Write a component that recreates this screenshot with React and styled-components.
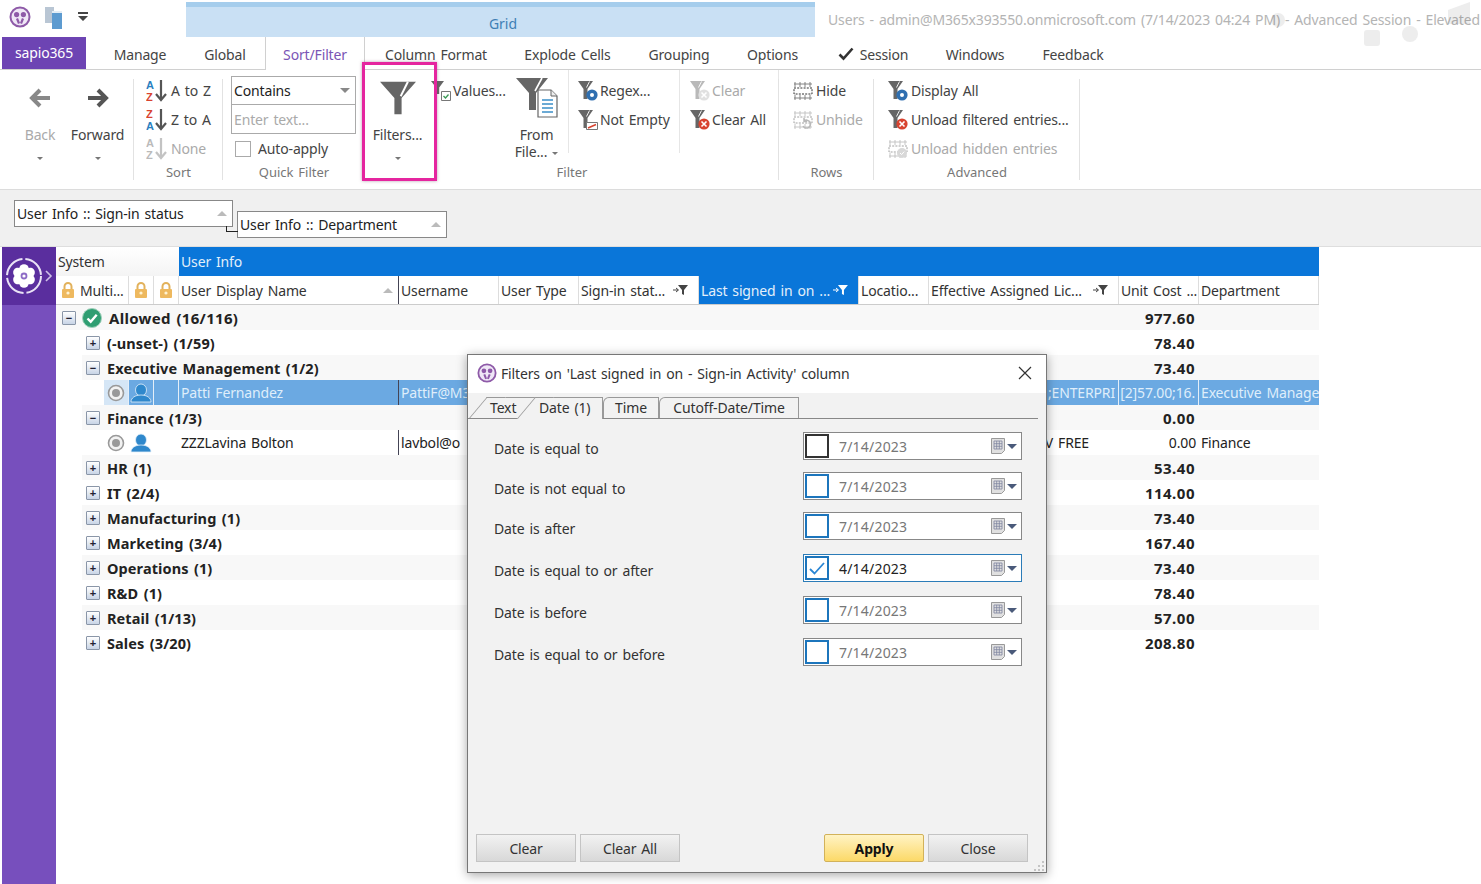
import React from 'react';
import styled, { createGlobalStyle } from 'styled-components';

const Global = createGlobalStyle`
  html, body { margin: 0; padding: 0; background: #fff; }
  body { font-family: "Noto Sans", "Open Sans", "Liberation Sans", sans-serif; font-size: 14px; color: #333; }
`;

const Page = styled.div`
  position: relative; width: 1481px; height: 884px; overflow: hidden; background: #fff;
  letter-spacing: -0.15px; word-spacing: 1.5px;
`;

/* ---------- title ---------- */
const TitleBar = styled.div`display: flex; height: 37px; align-items: stretch;`;
const Qat = styled.div`width: 186px; display: flex; align-items: center; padding: 0 0 4px 9px; box-sizing: border-box; gap: 13px;`;
const ContextTab = styled.div`
  width: 629px; margin-top: 2px; background: #c9e0f4; border-top: 5px solid #a5cdec; box-sizing: border-box;
  color: #3f7fb5; text-align: center; padding: 7px 0 0 5px; line-height: 20px; letter-spacing: 0;
`;
const WindowTitle = styled.div`margin-left: 13px; padding-top: 10px; line-height: 20px; color: #b4b4b4; white-space: nowrap;`;
const Ghost = styled.svg`position: absolute; left: 1270px; top: 0; opacity: .1;`;

/* ---------- tabs ---------- */
const TabRow = styled.div`display: flex; height: 33px; border-bottom: 1px solid #d0d0d0; box-sizing: border-box; padding-left: 2px;`;
const AppTab = styled.div`
  width: 84px; height: 32px; background: #6d44b3; color: #fff; text-align: center; line-height: 31px; margin-right: 9px;
`;
const Tab = styled.div`
  flex: 0 0 ${p => p.$w}px; box-sizing: border-box; height: ${p => p.$active ? 33 : 32}px; padding-top: 2px; white-space: nowrap;
  color: ${p => p.$active ? '#7a55b5' : '#444'};
  background: #fff;
  ${p => p.$active && 'border-left: 1px solid #d0d0d0; border-right: 1px solid #d0d0d0;'}
  display: flex; justify-content: center; gap: 6px; align-items: center;
`;

/* ---------- ribbon ---------- */
const Ribbon = styled.div`display: flex; height: 120px; padding-left: 2px; box-sizing: border-box; border-bottom: 1px solid #dcdcdc;`;
const Group = styled.div`
  flex: 0 0 ${p => p.$w}px; box-sizing: border-box; display: flex; flex-direction: column; position: relative;
  &::after { content: ''; position: absolute; right: 0; top: 9px; bottom: 9px; width: 1px; background: #e2e2e2; }
`;
const GroupBody = styled.div`flex: 1; display: flex; min-height: 0;`;
const GroupLabel = styled.div`height: 28px; line-height: 22px; text-align: center; color: #777; font-size: 13px; letter-spacing: 0;`;
const Big = styled.div`
  flex: 0 0 ${p => p.$w}px; min-width: 0; display: flex; flex-direction: column; align-items: center; color: ${p => p.$off ? '#aaa' : '#444'};
  line-height: 17px; padding-left: ${p => p.$pad || 0}px; box-sizing: border-box; white-space: nowrap;
  ${p => p.$sep && 'border-right: 1px solid #e6e6e6; margin-bottom: 8px;'}
`;
const BigIcon = styled.div`height: 46px; flex: none; display: flex; align-items: center; justify-content: center; margin: 5px 0;`;
const Dot = styled.div`width: 0; height: 0; border: 3px solid transparent; border-top: 3px solid #777; margin-top: 14px; border-bottom: 0;`;
const Stack = styled.div`
  flex: 0 0 ${p => p.$w}px; min-width: 0; box-sizing: border-box; padding: 6px 0 0 ${p => p.$pad || 0}px; display: flex; flex-direction: column;
  ${p => p.$sep && `border-right: 1px solid #e6e6e6; margin-bottom: 8px;`}
`;
const Item = styled.div`
  height: 29px; flex: none; display: flex; align-items: center; gap: ${p => p.$gap ?? 2}px; padding-left: ${p => p.$in || 0}px; white-space: nowrap; color: ${p => p.$off ? '#aaa' : '#444'};
`;
const IconBox = styled.span`flex: 0 0 ${p => p.$w || 21}px; display: flex; justify-content: center;`;
const Combo = styled.div`
  width: 125px; height: 29px; flex: none; border: 1px solid #aaa; box-sizing: border-box; display: flex; align-items: center; padding: 0 2px; color: ${p => p.$hint ? '#aaa' : '#222'};
  justify-content: space-between; background: #fff; & + & { border-top: 0; }
`;
const Tri = styled.span`
  width: 0; height: 0; border-left: 5px solid transparent; border-right: 5px solid transparent;
  ${p => p.$up ? `border-bottom: 5px solid ${p.$c || '#bbb'};` : `border-top: 5px solid ${p.$c || '#888'};`}
  margin-right: ${p => p.$mr ?? 3}px;
`;
const MiniTri = styled.span`
  display: inline-block; width: 0; height: 0; border-left: 3px solid transparent; border-right: 3px solid transparent; border-top: 3px solid #777; vertical-align: 2px;
`;
const Check = styled.span`width: 14px; height: 14px; border: 1px solid #aaa; background: #fff; display: inline-block;`;
const Highlight = styled.div`
  position: absolute; left: 362px; top: 62px; width: 75px; height: 119px; box-sizing: border-box;
  border: 3px solid #e5259f; box-shadow: 0 0 3px rgba(120,60,100,.5);
`;

/* ---------- group-by ---------- */
const GroupBy = styled.div`height: 57px; background: #f0f0f0; padding-left: 14px; display: flex; gap: 4px; box-sizing: border-box; border-bottom: 1px solid #dedede;`;
const GroupChip = styled.div`
  width: ${p => p.$w}px; height: 27px; margin-top: ${p => p.$top}px; box-sizing: border-box; background: #fff; border: 1px solid #888;
  display: flex; align-items: center; justify-content: space-between; padding: 0 5px 0 2px; color: #222; position: relative; white-space: nowrap;
  ${p => p.$link && `&::before { content: ''; position: absolute; left: -12px; top: 14px; width: 11px; height: 5px; border-left: 1px solid #222; border-bottom: 1px solid #222; }`}
`;

/* ---------- grid ---------- */
const Main = styled.div`display: flex; padding-left: 2px; height: 637px;`;
const Side = styled.div`width: 54px; background: #774fbd; flex: none;`;
const SideTop = styled.div`height: 58px; background: #5a2e9e; display: flex; align-items: center; padding: 0 0 0 1px; box-sizing: border-box;`;
const Sheet = styled.div`width: 1263px; flex: none;`;
const Bands = styled.div`display: flex; height: 29px;`;
const Band = styled.div`
  width: ${p => p.$w}px; line-height: 29px; padding-left: 2px; box-sizing: border-box; flex: ${p => p.$fill ? 1 : 'none'};
  background: ${p => p.$blue ? '#0a76d9' : 'linear-gradient(#fff,#f4f4f4)'}; color: ${p => p.$blue ? '#e3effa' : '#333'};
`;
const cols = '73px 25px 25px 220px 100px 80px 120px 160px 70px 190px 80px 120px';
const HeadRow = styled.div`display: grid; grid-template-columns: ${cols}; height: 29px; border-bottom: 1px solid #ccc; box-sizing: border-box;`;
const Head = styled.div`
  display: flex; align-items: center; justify-content: ${p => p.$only ? 'center' : p.$lock ? 'flex-start' : 'space-between'};
  padding: 0 ${p => p.$pr ?? 4}px 0 ${p => p.$only ? 0 : p.$lock ? 5 : 2}px; overflow: hidden; white-space: nowrap; box-sizing: border-box;
  border-right: 1px solid ${p => p.$dark ? '#445' : '#ddd'}; gap: ${p => p.$lock ? 5 : 3}px;
  background: ${p => p.$blue ? '#0a76d9' : '#fff'}; color: ${p => p.$blue ? '#e3effa' : '#333'};
`;
const Row = styled.div`
  height: 25px; margin-left: ${p => p.$in}px; display: flex; align-items: center; background: ${p => p.$shade ? '#f8f8f8' : '#fff'};
  font-weight: 700; font-size: ${p => p.$top ? 15 : 14.5}px; letter-spacing: ${p => p.$top ? .3 : .1}px; color: #222; padding-left: ${p => p.$pad}px; white-space: nowrap; box-sizing: border-box;
`;
const Expander = styled.span`
  width: 12px; height: 12px; border: 1px solid #8a96a8; border-radius: 1px; background: linear-gradient(#fff, #c8d4e6); color: #223; flex: none; margin-right: ${p => p.$mr}px;
  display: flex; align-items: center; justify-content: center; font: 700 11px/12px "Liberation Sans", sans-serif;
`;
const StatusIcon = styled.span`display: flex; margin-right: 7px; flex: none;`;
const Amount = styled.span`margin: 0 124px 0 auto; flex: none; font-size: 15px; letter-spacing: .5px;`;
const DataRow = styled.div`
  margin-left: 48px; height: 25px; display: grid; grid-template-columns: 25px 25px 25px 220px 100px 80px 120px 160px 70px 190px 80px 120px;
  background: ${p => p.$sel ? '#6ba9e2' : '#fff'}; color: ${p => p.$sel ? '#dfeefb' : '#222'};
`;
const Cell = styled.div`
  overflow: hidden; white-space: nowrap; padding: 0 ${p => p.$right ?? 0}px 0 ${p => p.$left ?? 2}px; box-sizing: border-box; 
  ${p => p.$line && `border-right: 1px solid ${p.$line};`}
  ${p => p.$focus && 'background: #d5e6f6;'}
  display: flex; align-items: center; ${p => p.$right !== undefined && 'justify-content: flex-end;'}
`;

/* ---------- dialog ---------- */
const Dialog = styled.div`
  position: absolute; left: 467px; top: 354px; width: 580px; height: 519px; box-sizing: border-box; background: #f2f2f2; border: 1px solid #777;
  box-shadow: 0 2px 10px rgba(0,0,0,.35); display: flex; flex-direction: column;
`;
const DlgTitle = styled.div`
  height: 38px; background: #fff; display: flex; align-items: center; padding: 0 14px 2px 9px; box-sizing: border-box; gap: 4px; color: #333; white-space: nowrap; flex: none;
`;
const CloseX = styled.svg`margin-left: auto;`;
const DlgTabs = styled.div`
  display: flex; height: 26px; margin-right: 8px; padding-left: 19px; box-sizing: border-box; border-bottom: 1px solid #888; flex: none; align-items: flex-end;
`;
const DlgTab = styled.div`
  position: relative; width: ${p => p.$w}px; flex: none; box-sizing: border-box; padding-left: ${p => p.$pad ?? 0}px; text-align: ${p => p.$pad !== undefined ? 'left' : 'center'}; line-height: 20px; color: #333; white-space: nowrap;
  border-top: 1px solid #999; 
  ${p => p.$edge && 'border-right: 1px solid #999;'}
  ${p => p.$round && 'border-top-left-radius: 6px; border-left: 1px solid #999;'}
  background: #f2f2f2; z-index: ${p => p.$active ? 2 : 1};
  margin-bottom: ${p => p.$active ? -1 : 0}px; height: ${p => p.$active ? 22 : 21}px;
  ${p => p.$slant && `&::before {
    content: ''; position: absolute; left: -9px; bottom: 0; top: -1px; width: 18px; background: inherit; border-left: 1px solid #999; border-top: 1px solid #999;
    transform: skewX(-40deg); z-index: -1;
  }`}
`;
const DlgBody = styled.div`flex: 1; padding: 13px 24px 0 26px; display: flex; flex-direction: column;`;
const DateRow = styled.div`display: flex; align-items: center; justify-content: space-between; height: 28px; margin-top: ${p => p.$gap}px; color: #333;`;
const DateLabel = styled.span`padding-top: 5px;`;
const Picker = styled.div`
  width: 219px; height: 28px; box-sizing: border-box; background: #fff; border: 1px solid ${p => p.$on ? '#2b7cb8' : '#888'}; letter-spacing: .2px;
  display: flex; align-items: center; padding: 0 4px 0 1px; color: ${p => p.$on ? '#222' : '#777'};
`;
const Box = styled.span`
  width: 24px; height: 24px; box-sizing: border-box; border: 2px solid ${p => p.$dark ? '#333' : '#1c75bc'}; background: #fff; margin-right: 10px; display: flex; align-items: center; justify-content: center; flex: none;
`;
const PickerIcons = styled.span`margin-left: auto; display: flex; align-items: center; gap: 2px;`;
const Footer = styled.div`margin-top: auto; padding: 0 18px 10px 8px; display: flex; gap: 4px; flex: none; position: relative;`;
const Btn = styled.div`
  width: 100px; height: 28px; box-sizing: border-box; text-align: center; line-height: 27px; color: #333; border: 1px solid #c4c4c4;
  background: ${p => p.$main ? 'linear-gradient(#fff3c4,#fcd968)' : 'linear-gradient(#f2f2f2,#d8d8d8)'};
  ${p => p.$main && 'border-color: #d2b25a; font-weight: 700; color: #111; border-radius: 2px; margin-left: auto;'}
`;
const Grip = styled.svg`position: absolute; right: 1px; bottom: 1px;`;
const FlipSvg = styled.svg`${p => p.$flip && 'transform: scaleX(-1);'}`;

/* ---------- icons ---------- */
const Logo = ({ s = 22 }) => (
  <svg width={s} height={s} viewBox="0 0 22 22">
    <circle cx="11" cy="11" r="9.5" fill="#efe7f6" stroke="#8e5aa8" strokeWidth="2" />
    <circle cx="7.6" cy="8.6" r="2.6" fill="#8e5aa8" /><circle cx="14.4" cy="8.6" r="2.6" fill="#8e5aa8" />
    <path d="M8 12.5l2 5M14 12.5l-2 5" stroke="#8e5aa8" strokeWidth="2.2" />
  </svg>
);
const Pages = () => (
  <svg width="20" height="24" viewBox="0 0 20 24">
    <path d="M1 2h9v16H1z" fill="#b9c6d4" /><path d="M8 6h10v18H8z" fill="#5d9bd0" /><path d="M8 6h10v2H8z" fill="#e3edf5" />
  </svg>
);
const QatCaret = () => (
  <svg width="12" height="12" viewBox="0 0 12 12"><path d="M1 1h10v2H1zM1 5h10L6 10z" fill="#444" /></svg>
);
const Arrow = ({ left, c }) => (
  <FlipSvg $flip={left} width="22" height="22" viewBox="0 0 22 22">
    <path d="M1 11h17M11 3l8 8-8 8" fill="none" stroke={c} strokeWidth="4" />
  </FlipSvg>
);
const Sort = ({ a, b, ca, cb, arrow = '#555', off }) => (
  <svg width="22" height="24" viewBox="0 0 22 24" opacity={off ? .5 : 1}>
    <text x="0" y="10" fontSize="11" fontWeight="700" fontFamily="Liberation Sans" fill={ca}>{a}</text>
    <text x="0" y="22" fontSize="11" fontWeight="700" fontFamily="Liberation Sans" fill={cb}>{b}</text>
    <path d="M15 1v19M10 15l5 6 5-6" fill="none" stroke={arrow} strokeWidth="2.2" />
  </svg>
);
const BigFunnel = () => (
  <svg width="36" height="36" viewBox="0 0 20 20">
    <path d="M0 1h20L12 10v9H8v-9z" fill="#666" /><path d="M15.5 1l-4 8" stroke="#fff" strokeWidth="1.1" />
  </svg>
);
const Funnel = ({ c = '#666', badge, off }) => (
  <svg width="20" height="20" viewBox="0 0 20 20" opacity={off ? .45 : 1}>
    <path d="M0 0h15L9.5 8v10h-4V8z" fill={c} />
    <path d="M11.5 .5l-3 6" stroke="#fff" strokeWidth=".9" />
    {badge === 'blue' && <g><circle cx="14" cy="14" r="5.6" fill="#2f6fb0" /><circle cx="14" cy="14" r="2" fill="#fff" /></g>}
    {badge === 'red' && <g><circle cx="14" cy="14" r="5.6" fill="#d8432f" /><path d="M11.5 11.5l5 5M16.5 11.5l-5 5" stroke="#fff" strokeWidth="1.6" /></g>}
    {badge === 'gray' && <g><circle cx="14" cy="14" r="5.6" fill="#bbb" /><path d="M11.5 11.5l5 5M16.5 11.5l-5 5" stroke="#fff" strokeWidth="1.6" /></g>}
    {badge === 'empty' && <g><path d="M8.5 12.5h11v7h-11z" fill="#fff" stroke="#777" /><path d="M10 18l8-3.5" stroke="#d8432f" strokeWidth="1.6" /></g>}
  </svg>
);
const ValuesIcon = () => (
  <svg width="20" height="20" viewBox="0 0 20 20">
    <path d="M0 0h13L8.2 6.5V13H5V6.5z" fill="#666" />
    <path d="M10.5 10.5h9v9h-9z" fill="#fff" stroke="#777" /><path d="M12.5 15l2 2 3-3.5" fill="none" stroke="#3a9a55" strokeWidth="1.3" />
  </svg>
);
const BigFile = () => (
  <svg width="42" height="44" viewBox="0 0 42 44">
    <path d="M0 2h32L20 17v17h-7V17z" fill="#666" />
    <path d="M26 2l-7 13" stroke="#fff" strokeWidth="1.6" />
    <path d="M22 14h13l6 6v21H22z" fill="#fff" stroke="#666" strokeWidth="1.2" />
    <path d="M35 14v6h6" fill="#eee" stroke="#666" />
    <path d="M26 24h11M26 28h11M26 32h11M26 36h11" stroke="#3b8fc7" strokeWidth="1.3" />
  </svg>
);
const RowsIcon = ({ off, mark }) => (
  <svg width="20" height="20" viewBox="0 0 20 20" opacity={off ? .45 : 1}>
    <path d="M2 1v5M7 1v5M12 1v5M17 1v5M2 14v5M7 14v5M12 14v5M17 14v5M1 3h18M1 17h18" stroke="#777" strokeWidth=".9" />
    <path d="M1 7h18v6H1z" fill="#fff" stroke="#333" strokeDasharray="2 1.2" />
    {mark === 'undo' && <path d="M10 16a4 4 0 1 0 1-5M11 8v3.4h3" fill="none" stroke="#666" strokeWidth="1.5" />}
    {mark === 'gear' && <g><circle cx="14" cy="14" r="5" fill="#aaa" /><path d="M12 14l1.6 1.6 2.6-3" stroke="#fff" fill="none" /></g>}
  </svg>
);
const TinyFilter = ({ c = '#444' }) => (
  <svg width="15" height="12" viewBox="0 0 15 12"><path d="M5 1h10l-4 5v5l-2-1V6z" fill={c} /><path d="M0 6h5M3 4l2.5 2L3 8" stroke={c} fill="none" /></svg>
);
const Lock = () => (
  <svg width="14" height="17" viewBox="0 0 14 17">
    <path d="M3.5 7V4.5a3.5 3.5 0 0 1 7 0V7" fill="none" stroke="#e2b25c" strokeWidth="2" />
    <rect x="1" y="7" width="12" height="9" rx="1" fill="#eeb95f" /><circle cx="7" cy="11" r="1.6" fill="#fff3d2" />
  </svg>
);
const SideGear = () => (
  <svg width="50" height="44" viewBox="0 0 50 44">
    <circle cx="21" cy="22" r="17" fill="none" stroke="#e9e2f5" strokeWidth="2" strokeDasharray="24 3" />
    {[0, 60, 120, 180, 240, 300].map(a => <circle key={a} cx="21" cy="15" r="4.8" fill="#fff" transform={`rotate(${a} 21 22)`} />)}
    <circle cx="21" cy="22" r="3.4" fill="#8e6cc6" /><circle cx="21" cy="22" r="1.6" fill="#fff" />
    <path d="M43 17l5 5-5 5" fill="none" stroke="#cdbfe6" strokeWidth="1.6" />
  </svg>
);
const Ok = () => (
  <svg width="20" height="20" viewBox="0 0 20 20">
    <circle cx="10" cy="10" r="9.5" fill="#2f9e72" stroke="#9fd0ba" /><path d="M5.5 10.5l3.2 3.2 6-7" fill="none" stroke="#fff" strokeWidth="2.4" />
  </svg>
);
const Radio = () => (
  <svg width="18" height="18" viewBox="0 0 18 18"><circle cx="9" cy="9" r="7.5" fill="#f2f2f2" stroke="#999" strokeWidth="1.6" /><circle cx="9" cy="9" r="4" fill="#999" /></svg>
);
const Person = () => (
  <svg width="22" height="20" viewBox="0 0 22 20">
    <ellipse cx="11" cy="7" rx="5.5" ry="6" fill="#2f88cc" stroke="#e3f0fa" strokeWidth=".8" />
    <path d="M1 19c0-4 4-7 10-7s10 3 10 7z" fill="#2f88cc" stroke="#e3f0fa" strokeWidth=".8" />
  </svg>
);
const Calendar = () => (
  <svg width="14" height="16" viewBox="0 0 14 16">
    <path d="M.5.5h13v12l-3 3h-10z" fill="#e0e0e0" stroke="#999" />
    <path d="M3 3h8v8H3zM5.7 3v8M8.3 3v8M3 5.7h8M3 8.3h8" fill="none" stroke="#7d84a0" strokeWidth=".8" />
  </svg>
);

/* ---------- data ---------- */
const heads = [
  { t: 'Multi...', lock: true }, { lock: true, only: true }, { lock: true, only: true },
  { t: 'User Display Name', up: true, dark: true }, { t: 'Username' }, { t: 'User Type' },
  { t: 'Sign-in stat...', f: '#444' }, { t: 'Last signed in on ...', f: '#fff', blue: true }, { t: 'Locatio...' },
  { t: 'Effective Assigned Lic...', f: '#444' }, { t: 'Unit Cost ...' }, { t: 'Department' },
];
const rows = [
  { k: 'g', t: 'Allowed (16/116)', a: '977.60', top: true, shade: true },
  { k: 'g', t: '(-unset-) (1/59)', a: '78.40' },
  { k: 'g', t: 'Executive Management (1/2)', a: '73.40', open: true, shade: true },
  { k: 'd', sel: true, name: 'Patti Fernandez', user: 'PattiF@M365x', lic: ';ENTERPRI', licPad: 3, cost: '[2]57.00;16.', dept: 'Executive Management' },
  { k: 'g', t: 'Finance (1/3)', a: '0.00', open: true, shade: true },
  { k: 'd', name: 'ZZZLavina Bolton', user: 'lavbol@o', lic: 'V FREE', licPad: 30, cost: '0.00', dept: 'Finance' },
  { k: 'g', t: 'HR (1)', a: '53.40', shade: true },
  { k: 'g', t: 'IT (2/4)', a: '114.00' },
  { k: 'g', t: 'Manufacturing (1)', a: '73.40', shade: true },
  { k: 'g', t: 'Marketing (3/4)', a: '167.40' },
  { k: 'g', t: 'Operations (1)', a: '73.40', shade: true },
  { k: 'g', t: 'R&D (1)', a: '78.40' },
  { k: 'g', t: 'Retail (1/13)', a: '57.00', shade: true },
  { k: 'g', t: 'Sales (3/20)', a: '208.80' },
];
const dates = [
  { l: 'Date is equal to', d: '7/14/2023', gap: 0, dark: true },
  { l: 'Date is not equal to', d: '7/14/2023', gap: 12 },
  { l: 'Date is after', d: '7/14/2023', gap: 12 },
  { l: 'Date is equal to or after', d: '4/14/2023', gap: 14, on: true },
  { l: 'Date is before', d: '7/14/2023', gap: 14 },
  { l: 'Date is equal to or before', d: '7/14/2023', gap: 14 },
];
const tabs = [
  { t: 'Manage', w: 90 }, { t: 'Global', w: 80 }, { t: 'Sort/Filter', w: 100, active: true }, { t: 'Column Format', w: 142 },
  { t: 'Explode Cells', w: 121 }, { t: 'Grouping', w: 102 }, { t: 'Options', w: 85 }, { t: 'Session', w: 116, check: true },
  { t: 'Windows', w: 88 }, { t: 'Feedback', w: 108 },
];
const sel = '#e4eef8';

export default function App() {
  return (
    <Page>
      <Global />
      <TitleBar>
        <Qat><Logo /><Pages /><QatCaret /></Qat>
        <ContextTab>Grid</ContextTab>
        <WindowTitle>Users - admin@M365x393550.onmicrosoft.com (7/14/2023 04:24 PM) - Advanced Session - Elevated</WindowTitle>
      </TitleBar>
      <Ghost width="200" height="50" viewBox="0 0 200 50">
        <circle cx="8" cy="20" r="7" fill="#555" /><rect x="94" y="30" width="16" height="16" rx="3" fill="#555" /><circle cx="140" cy="34" r="8" fill="#555" /><path d="M178 10l22-8v22h-22z" fill="#555" />
      </Ghost>
      <TabRow>
        <AppTab>sapio365</AppTab>
        {tabs.map(x => (
          <Tab key={x.t} $w={x.w} $active={x.active}>
            {x.check && <svg width="16" height="14" viewBox="0 0 16 14"><path d="M1.5 7.5l4 4 9-10" fill="none" stroke="#333" strokeWidth="2.6" /></svg>}
            {x.t}
          </Tab>
        ))}
      </TabRow>
      <Ribbon>
        <Group $w={132}>
          <GroupBody>
            <Big $w={69} $pad={7} $off><BigIcon><Arrow left c="#888" /></BigIcon>Back<Dot /></Big>
            <Big $w={53}><BigIcon><Arrow c="#555" /></BigIcon>Forward<Dot /></Big>
          </GroupBody>
        </Group>
        <Group $w={89}>
          <GroupBody>
            <Stack $w={89} $pad={12}>
              <Item $gap={3}><Sort a="A" b="Z" ca="#2a7fc0" cb="#d8432f" />A to Z</Item>
              <Item $gap={3}><Sort a="Z" b="A" ca="#d8432f" cb="#2a7fc0" />Z to A</Item>
              <Item $gap={3} $off><Sort off a="A" b="Z" ca="#777" cb="#777" arrow="#888" />None</Item>
            </Stack>
          </GroupBody>
          <GroupLabel>Sort</GroupLabel>
        </Group>
        <Group $w={142}>
          <GroupBody>
            <Stack $w={142} $pad={8}>
              <Combo>Contains<Tri /></Combo>
              <Combo $hint>Enter text...</Combo>
              <Item $gap={7} $in={4}><Check />Auto-apply</Item>
            </Stack>
          </GroupBody>
          <GroupLabel>Quick Filter</GroupLabel>
        </Group>
        <Group $w={414}>
          <GroupBody>
            <Big $w={65}><BigIcon><BigFunnel /></BigIcon>Filters...<Dot /></Big>
            <Stack $w={75}>
              <Item><IconBox><ValuesIcon /></IconBox>Values...</Item>
            </Stack>
            <Big $w={64} $sep>
              <BigIcon><BigFile /></BigIcon>From<span>File... <MiniTri /></span>
            </Big>
            <Stack $w={111} $pad={8} $sep>
              <Item><IconBox><Funnel badge="blue" /></IconBox>Regex...</Item>
              <Item><IconBox><Funnel badge="empty" /></IconBox>Not Empty</Item>
            </Stack>
            <Stack $w={99} $pad={9} $sep>
              <Item $off><IconBox><Funnel badge="gray" off /></IconBox>Clear</Item>
              <Item><IconBox><Funnel badge="red" /></IconBox>Clear All</Item>
            </Stack>
          </GroupBody>
          <GroupLabel>Filter</GroupLabel>
        </Group>
        <Group $w={95}>
          <GroupBody>
            <Stack $w={95} $pad={13}>
              <Item><IconBox $w={22}><RowsIcon /></IconBox>Hide</Item>
              <Item $off><IconBox $w={22}><RowsIcon off mark="undo" /></IconBox>Unhide</Item>
            </Stack>
          </GroupBody>
          <GroupLabel>Rows</GroupLabel>
        </Group>
        <Group $w={206}>
          <GroupBody>
            <Stack $w={206} $pad={13}>
              <Item><IconBox $w={22}><Funnel badge="blue" /></IconBox>Display All</Item>
              <Item><IconBox $w={22}><Funnel badge="red" /></IconBox>Unload filtered entries...</Item>
              <Item $off><IconBox $w={22}><RowsIcon off mark="gear" /></IconBox>Unload hidden entries</Item>
            </Stack>
          </GroupBody>
          <GroupLabel>Advanced</GroupLabel>
        </Group>
      </Ribbon>
      <Highlight />
      <GroupBy>
        <GroupChip $w={219} $top={10}>User Info :: Sign-in status<Tri $up $mr={0} /></GroupChip>
        <GroupChip $w={210} $top={21} $link>User Info :: Department<Tri $up $mr={0} /></GroupChip>
      </GroupBy>
      <Main>
        <Side><SideTop><SideGear /></SideTop></Side>
        <Sheet>
          <Bands>
            <Band $w={123}>System</Band>
            <Band $blue $fill>User Info</Band>
          </Bands>
          <HeadRow>
            {heads.map((h, i) => (
              <Head key={i} $blue={h.blue} $dark={h.dark} $lock={h.lock} $only={h.only} $pr={h.f ? 10 : 1}>
                {h.lock && <Lock />}
                {h.t && <span>{h.t}</span>}
                {h.up && <Tri $up $mr={4} />}
                {h.f && <TinyFilter c={h.f} />}
              </Head>
            ))}
          </HeadRow>
          {rows.map((r, i) => r.k === 'g' ? (
            <Row key={i} $in={r.top ? 0 : 26} $pad={r.top ? 6 : 4} $shade={r.shade} $top={r.top}>
              <Expander $mr={r.top ? 6 : 7}>{r.open || r.top ? '−' : '+'}</Expander>
              {r.top && <StatusIcon><Ok /></StatusIcon>}
              {r.t}
              <Amount>{r.a}</Amount>
            </Row>
          ) : (
            <DataRow key={i} $sel={r.sel}>
              <Cell $focus={r.sel} $line={r.sel ? sel : undefined} $left={3}><Radio /></Cell>
              <Cell $line={r.sel ? sel : undefined} $left={1}><Person /></Cell>
              <Cell $line={r.sel ? sel : undefined} />
              <Cell $line="#445">{r.name}</Cell>
              <Cell>{r.user}</Cell>
              <Cell /><Cell /><Cell /><Cell />
              <Cell $line={r.sel ? sel : undefined} $right={r.licPad}>{r.lic}</Cell>
              <Cell $line={r.sel ? sel : undefined} $right={3}>{r.cost}</Cell>
              <Cell>{r.dept}</Cell>
            </DataRow>
          ))}
        </Sheet>
      </Main>
      <Dialog>
        <DlgTitle>
          <Logo s={20} />
          Filters on 'Last signed in on - Sign-in Activity' column
          <CloseX width="14" height="14" viewBox="0 0 14 14"><path d="M1 1l12 12M13 1L1 13" stroke="#333" strokeWidth="1.2" /></CloseX>
        </DlgTitle>
        <DlgTabs>
          <DlgTab $w={48} $pad={3} $slant>Text</DlgTab>
          <DlgTab $w={68} $pad={4} $slant $active $edge>Date (1)</DlgTab>
          <DlgTab $w={56} $edge $round>Time</DlgTab>
          <DlgTab $w={140} $edge $round>Cutoff-Date/Time</DlgTab>
        </DlgTabs>
        <DlgBody>
          {dates.map(d => (
            <DateRow key={d.l} $gap={d.gap}>
              <DateLabel>{d.l}</DateLabel>
              <Picker $on={d.on}>
                <Box $dark={d.dark}>
                  {d.on && <svg width="18" height="14" viewBox="0 0 18 14"><path d="M2 8l4.5 4.5L16 2" fill="none" stroke="#2a86d4" strokeWidth="1.8" /></svg>}
                </Box>
                {d.d}
                <PickerIcons><Calendar /><Tri $c="#4a5a7a" $mr={0} /></PickerIcons>
              </Picker>
            </DateRow>
          ))}
        </DlgBody>
        <Footer>
          <Btn>Clear</Btn>
          <Btn>Clear All</Btn>
          <Btn $main>Apply</Btn>
          <Btn>Close</Btn>
          <Grip width="11" height="11" viewBox="0 0 11 11"><path d="M8 1h2v2H8zM8 5h2v2H8zM4 5h2v2H4zM8 9h2v2H8zM4 9h2v2H4zM0 9h2v2H0z" fill="#c4c4c4" /></Grip>
        </Footer>
      </Dialog>
    </Page>
  );
}
